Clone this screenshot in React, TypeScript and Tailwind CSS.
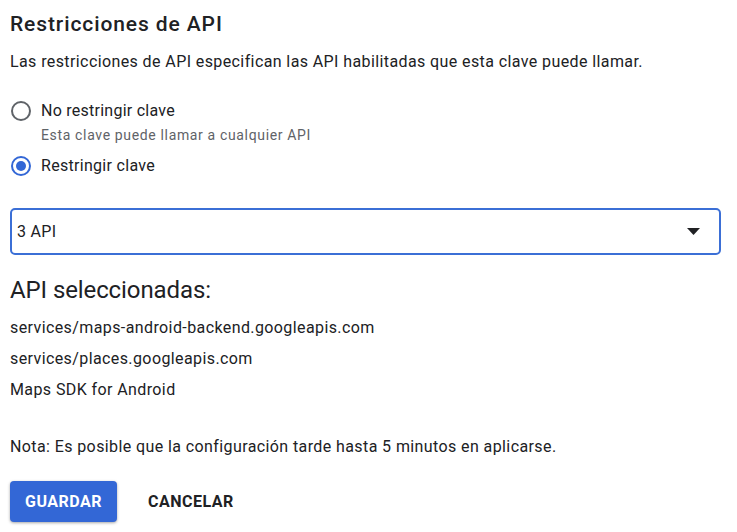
import React from "react";

export default function App() {
  return (
    <div className="w-[737px] h-[532px] bg-white text-[#202124] px-[10px] pt-[8px]" style={{ fontFamily: "Roboto, 'Liberation Sans', sans-serif" }}>
      <h1 className="text-[21px] font-medium leading-[32px] tracking-[0.9px]">Restricciones de API</h1>
      <p className="text-[16px] leading-[20px] tracking-[0.4px] mt-[12px]">Las restricciones de API especifican las API habilitadas que esta clave puede llamar.</p>
      <div className="mt-[29px] flex flex-col">
        <label className="flex items-start gap-[10px]">
          <span className="ml-[1px] w-[20px] h-[20px] rounded-full border-2 border-[#5f6368] shrink-0" />
          <span className="flex flex-col">
            <span className="text-[16px] leading-[20px] tracking-[0.25px]">No restringir clave</span>
            <span className="text-[14px] leading-[18px] tracking-[0.65px] text-[#5f6368] mt-[5px]">Esta clave puede llamar a cualquier API</span>
          </span>
        </label>
        <label className="flex items-center gap-[10px] mt-[12px]">
          <span className="ml-[1px] w-[20px] h-[20px] rounded-full border-2 border-[#3367d6] shrink-0 flex items-center justify-center">
            <span className="w-[10px] h-[10px] rounded-full bg-[#3367d6]" />
          </span>
          <span className="text-[16px] leading-[20px] tracking-[0.3px]">Restringir clave</span>
        </label>
      </div>
      <div className="mt-[32px] w-[711px] h-[47px] border-2 border-[#3b6fd6] rounded-[5px] flex items-center justify-between pl-[5px] pr-[19px]">
        <span className="text-[16px] tracking-[0.3px]">3 API</span>
        <svg width="13" height="7" viewBox="0 0 13 7"><path d="M0 0 L13 0 L6.5 7 Z" fill="#202124" /></svg>
      </div>
      <h2 className="text-[24px] leading-[30px] tracking-[-0.1px] mt-[20px]">API seleccionadas:</h2>
      <ul className="mt-[13px] flex flex-col gap-[11px] text-[16px] leading-[20px] tracking-[0.4px]">
        <li>services/maps-android-backend.googleapis.com</li>
        <li>services/places.googleapis.com</li>
        <li>Maps SDK for Android</li>
      </ul>
      <p className="text-[16px] leading-[20px] tracking-[0.4px] mt-[37px]">Nota: Es posible que la configuración tarde hasta 5 minutos en aplicarse.</p>
      <div className="mt-[24px] flex items-center gap-[31px]">
        <button className="h-[41px] w-[107px] rounded-[4px] bg-[#3367d6] text-white text-[16px] font-bold tracking-[0.5px] shadow-[0_1px_3px_rgba(0,0,0,0.35)]">GUARDAR</button>
        <button className="text-[16px] font-bold tracking-[0.5px] text-[#202124]">CANCELAR</button>
      </div>
    </div>
  );
}
